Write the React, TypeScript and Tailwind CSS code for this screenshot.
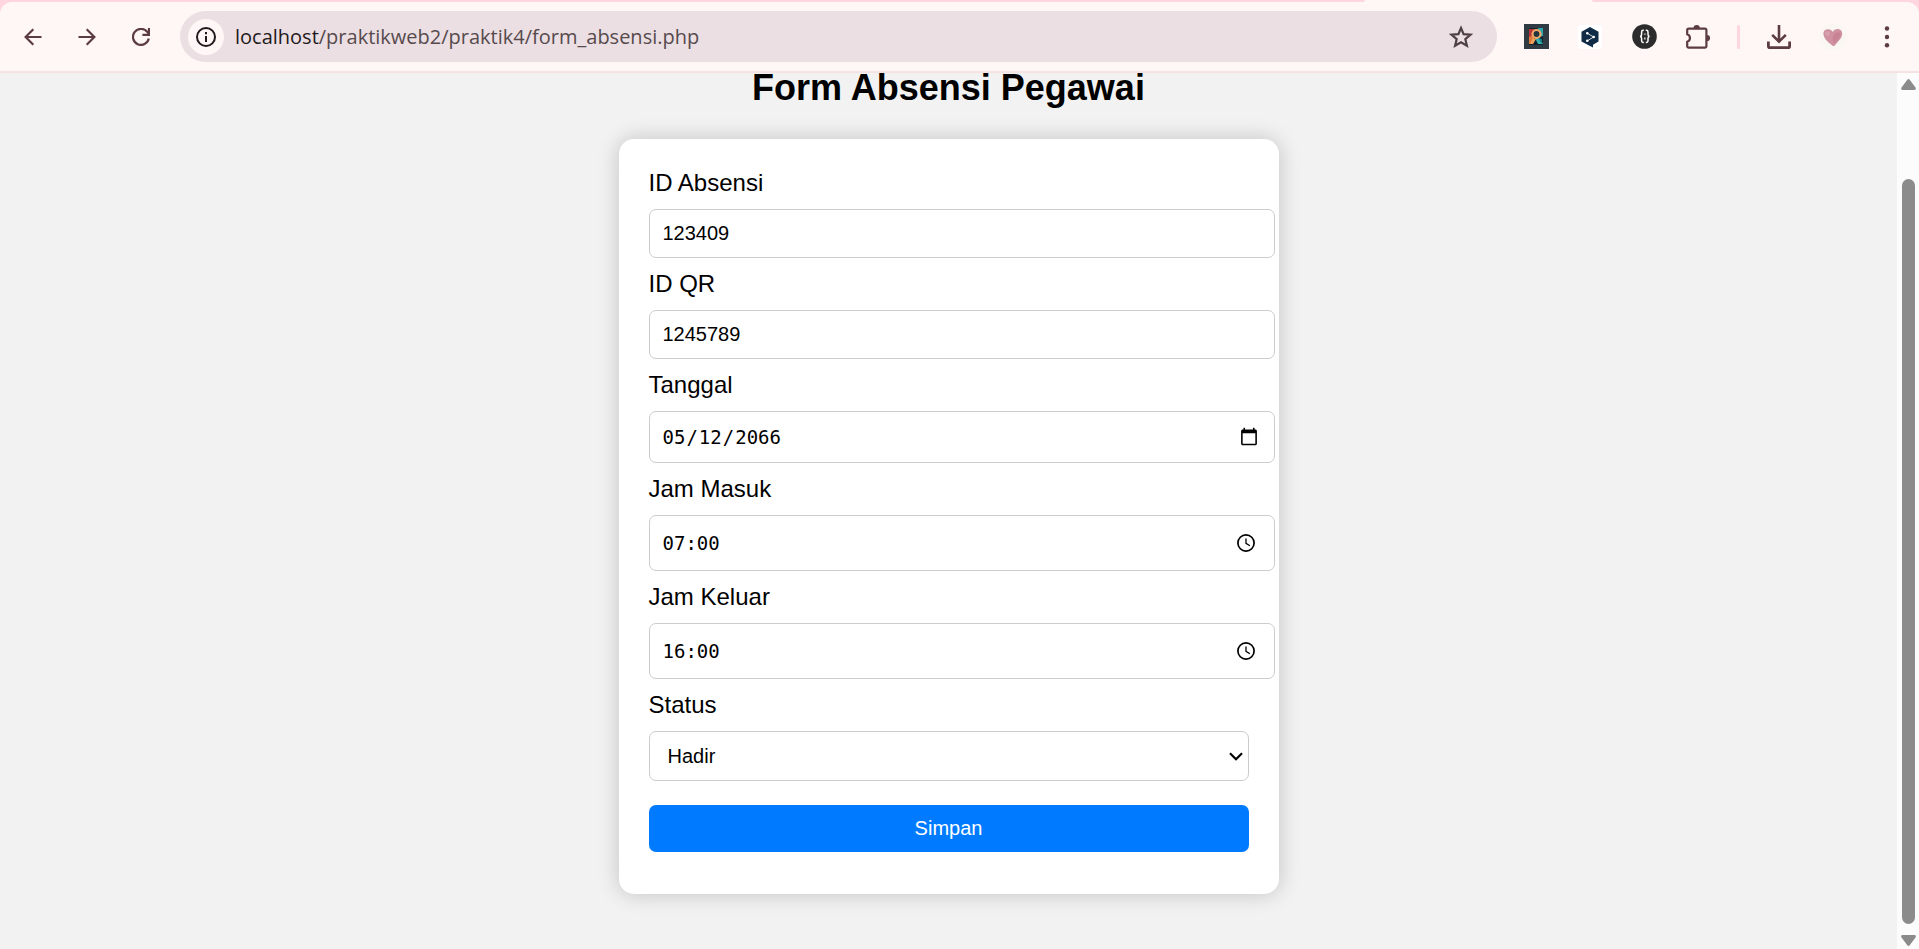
import type { ReactNode } from 'react';

function BackIcon() {
  return (
    <svg width="18" height="18" viewBox="0 0 18 18" fill="none" stroke="#5c3c42" strokeWidth="2.2">
      <path d="M17.5 9H2M9.3 1.2 1.6 9l7.7 7.8" />
    </svg>
  );
}

function ForwardIcon() {
  return (
    <svg width="18" height="18" viewBox="0 0 18 18" fill="none" stroke="#5c3c42" strokeWidth="2.2">
      <path d="M.5 9H16M8.7 1.2 16.4 9l-7.7 7.8" />
    </svg>
  );
}

function ReloadIcon() {
  return (
    <svg width="18" height="18" viewBox="0 0 18 18" fill="none" stroke="#5c3c42" strokeWidth="2.2">
      <path d="M16.8 10.6A8 8 0 1 1 15 3.6L17 6" />
      <path d="M17 0v6.9h-6.6" />
    </svg>
  );
}

function InfoIcon() {
  return (
    <svg width="20" height="20" viewBox="0 0 20 20" fill="none" stroke="#1f1a1b" strokeWidth="2">
      <circle cx="10" cy="10" r="9" />
      <path d="M10 9v6M10 5v2.2" />
    </svg>
  );
}

function StarIcon() {
  return (
    <svg width="24" height="24" viewBox="0 0 24 24" fill="none" stroke="#4f4044" strokeWidth="2.2">
      <path d="M12 3l2.600 6.200 6.900.5-5.200 4.400 1.600 6.700L12 17.200 6.100 20.800l1.600-6.700-5.200-4.400 6.900-.5z" />
    </svg>
  );
}

function PosterIcon() {
  return (
    <svg width="25" height="25" viewBox="0 0 25 25">
      <rect width="25" height="25" fill="#2f3a42" />
      <rect x="5" y="4" width="14" height="17" fill="#14212b" />
      <path d="M5 5h5v6l-3 3H5z" fill="#b8323a" />
      <path d="M14 4h5v8l-4 1z" fill="#2ba7ad" />
      <path d="M11 14l4-1 4 7h-5z" fill="#36b3b0" />
      <path d="M5 13l5-2v5l-4 4H5z" fill="#e07a3a" />
      <circle cx="12.500" cy="10" r="4" fill="#22343e" stroke="#f3a867" strokeWidth="2.200" />
      <path d="M9 14l3 1-3 5H6z" fill="#f0a35e" />
      <path d="M14 14l4 1v5z" fill="#157c88" />
    </svg>
  );
}

function TranslateIcon() {
  return (
    <svg width="24" height="24" viewBox="0 0 24 24">
      <rect width="24" height="24" rx="3" fill="#fff" />
      <path d="M12 2l8.500 4.800v9.800L15 19.800V22.500l-3.500-1.800-8-4.100V6.800z" fill="#0f2b46" />
      <path d="M9.300 8.300l6.400 3.700-6.400 3.800" fill="none" stroke="#fff" strokeWidth=".8" />
      <g fill="#fff">
        <circle cx="9.300" cy="8.300" r="1.300" />
        <circle cx="15.700" cy="12" r="1.300" />
        <circle cx="9.300" cy="15.800" r="1.300" />
      </g>
    </svg>
  );
}

function BracesIcon() {
  return (
    <svg width="25" height="25" viewBox="0 0 25 25">
      <circle cx="12.500" cy="12.500" r="12.300" fill="#2d2c2d" />
      <g fill="none" stroke="#fff" strokeWidth="1.500">
        <path d="M11.800 6.300h-.6c-1 0-1.600.5-1.600 1.600v2.600c0 1.200-.4 1.700-1.500 1.900 1.100.2 1.500.7 1.500 1.900v2.500c0 1.100.6 1.600 1.600 1.600h.6" />
        <path d="M13.800 6.300h.6c1 0 1.600.5 1.600 1.600v2.600c0 1.200.4 1.700 1.500 1.900-1.100.2-1.500.7-1.500 1.900v2.500c0 1.100-.6 1.600-1.600 1.600h-.6" />
        <path d="M12.900 9.400v1.400M12.900 13.500v2" strokeWidth="1.200" />
      </g>
    </svg>
  );
}

function PuzzleIcon() {
  return (
    <svg width="26" height="26" viewBox="0 0 26 26">
      <path
        d="M3.600 4.600H20a1.400 1.400 0 0 1 1.400 1.400v16.300a1.400 1.400 0 0 1-1.400 1.400H3.600a1.400 1.400 0 0 1-1.400-1.400v-4.500a4 4 0 0 0 0-7.600V6a1.400 1.400 0 0 1 1.400-1.400z"
        fill="none"
        stroke="#5c3c42"
        strokeWidth="2.200"
      />
      <path d="M8.600 4a3.100 3.100 0 0 1 6.200 0zM22 11a3.100 3.100 0 0 1 0 6.200z" fill="#5c3c42" />
    </svg>
  );
}

function DownloadIcon() {
  return (
    <svg width="24" height="24" viewBox="0 0 24 24" fill="none" stroke="#5c3c42">
      <path d="M12 0v16M5.200 9.800l6.800 6.800 6.800-6.800" strokeWidth="2.600" />
      <path d="M1.400 16.500v4.700c0 .8.600 1.400 1.400 1.400h18.400c.8 0 1.400-.6 1.400-1.400v-4.700" strokeWidth="2.800" />
    </svg>
  );
}

function ProfileIcon() {
  return (
    <svg width="28" height="28" viewBox="0 0 28 28">
      <circle cx="14" cy="14" r="14" fill="#faf7f2" />
      <path
        d="M13.800 9C12.500 5.200 4.300 4.700 4.400 10.800c.2 5 5.400 9 9.200 12 1.200.5 2 .2 2.600-.7 2.600-3.700 7-6.400 7-11.800-.5-5.300-7.600-5.500-9.400-1.300z"
        fill="#cf919f"
      />
      <path d="M15 12c2-3.500 5-3.500 6.500-1.500.5 4-3.500 7-6 9.500-2-1-2.500-5-.5-8z" fill="#c37d90" opacity=".7" />
      <path d="M6 9c1.500-1.500 4-1 5.500 1.500C11 13 8 13.500 6.500 12.500z" fill="#dba9b3" opacity=".6" />
    </svg>
  );
}

function MenuIcon() {
  return (
    <svg width="6" height="24" viewBox="0 0 6 24" fill="#5c3c42">
      <circle cx="3" cy="3.500" r="2.200" />
      <circle cx="3" cy="12" r="2.200" />
      <circle cx="3" cy="20.200" r="2.200" />
    </svg>
  );
}

function ClockIcon() {
  return (
    <svg width="18" height="18" viewBox="0 0 18 18" fill="none" stroke="#000">
      <circle cx="9" cy="9" r="8.100" strokeWidth="1.700" />
      <path d="M9 4.400v5l3.900 2.400" strokeWidth="1.300" />
    </svg>
  );
}

function IconButton({ label, children }: { label: string; children: ReactNode }) {
  return (
    <button type="button" aria-label={label} className="flex size-7 shrink-0 items-center justify-center">
      {children}
    </button>
  );
}

function BrowserBar() {
  return (
    <header className="bg-[#ffd6df]">
      <div className="flex h-[2px] bg-[#fff7f5]">
        <div className="flex-1 rounded-br-[2px] bg-[#ffd6df]" />
        <div className="w-[227px]" />
        <div className="w-[327px] rounded-bl-[2px] bg-[#ffd6df]" />
      </div>
      <div className="flex h-[71px] items-center rounded-t-xl border-b-2 border-[#f5e2e2] bg-[#fff7f5] pr-[18px] pl-[19px]">
        <nav className="flex gap-[26px] pr-[25px]">
          <IconButton label="Back"><BackIcon /></IconButton>
          <IconButton label="Forward"><ForwardIcon /></IconButton>
          <IconButton label="Reload"><ReloadIcon /></IconButton>
        </nav>
        <div className="flex h-[51px] min-w-0 flex-1 items-center rounded-full bg-[#ebdfe3] pr-[22px] pl-2">
          <button
            type="button"
            aria-label="Site information"
            className="flex size-9 shrink-0 items-center justify-center rounded-full bg-[#fff7f5]"
          >
            <InfoIcon />
          </button>
          <p className="ml-[11px] flex-1 truncate font-['Open_Sans','Noto_Sans',sans-serif] text-[20px] leading-7 text-[#574a4d]">
            <span className="text-[#1f1a1b]">localhost</span>/praktikweb2/praktik4/form_absensi.php
          </p>
          <IconButton label="Bookmark"><StarIcon /></IconButton>
        </div>
        <div className="flex items-center gap-[26px] pl-[25px]">
          <IconButton label="Poster extension"><PosterIcon /></IconButton>
          <IconButton label="Translate extension"><TranslateIcon /></IconButton>
          <IconButton label="JSON extension"><BracesIcon /></IconButton>
          <IconButton label="Extensions"><PuzzleIcon /></IconButton>
        </div>
        <div className="mx-[25px] h-6 w-[3px] rounded-full bg-[#ffd6df]" />
        <div className="flex items-center gap-[26px]">
          <IconButton label="Downloads"><DownloadIcon /></IconButton>
          <IconButton label="Profile"><ProfileIcon /></IconButton>
          <IconButton label="Menu"><MenuIcon /></IconButton>
        </div>
      </div>
    </header>
  );
}

function Scrollbar() {
  return (
    <div aria-hidden="true" className="flex w-[22px] shrink-0 flex-col items-center bg-[#fcfcfc] pt-[6px] pb-[3px]">
      <svg width="15" height="11" viewBox="0 0 15 11" fill="#8b8b8b">
        <path d="M6.300.8a1.600 1.600 0 0 1 2.400 0l5.800 7.800c.7 1 .2 2.400-1 2.400h-12C.3 11-.2 9.600.5 8.600z" />
      </svg>
      <div className="mt-[89px] mb-[11px] w-[13px] flex-1 rounded-full bg-[#8b8b8b]" />
      <svg width="15" height="11" viewBox="0 0 15 11" fill="#8b8b8b">
        <path d="M6.300 10.200a1.600 1.600 0 0 0 2.400 0l5.800-7.800c.7-1 .2-2.400-1-2.400h-12C.3 0-.2 1.400.5 2.400z" />
      </svg>
    </div>
  );
}

function Field({ id, label, children }: { id: string; label: string; children: ReactNode }) {
  return (
    <div className="mb-3">
      <label htmlFor={id} className="mb-3 block text-[24px] leading-7">
        {label}
      </label>
      {children}
    </div>
  );
}

function TextInput({ id, value }: { id: string; value: string }) {
  return (
    <input
      id={id}
      name={id}
      type="text"
      defaultValue={value}
      className="block h-[49px] w-[calc(100%+26px)] rounded-[7px] border border-[#ccc] bg-white px-[13px] text-[20px]"
    />
  );
}

function TimeInput({ id, value }: { id: string; value: string }) {
  return (
    <div className="relative w-[calc(100%+26px)]">
      <input
        id={id}
        name={id}
        type="text"
        defaultValue={value}
        className="block h-14 w-full rounded-[7px] border border-[#ccc] bg-white px-[13px] font-['DejaVu_Sans_Mono',monospace] text-[19px]"
      />
      <button type="button" aria-label="Pilih jam" className="absolute inset-y-0 right-5 flex items-center">
        <ClockIcon />
      </button>
    </div>
  );
}

export default function App() {
  return (
    <div className="flex min-h-screen flex-col font-['Liberation_Sans',Arial,sans-serif] text-black">
      <BrowserBar />
      <div className="flex flex-1 bg-[#f2f2f2]">
        <main className="flex min-w-0 flex-1 flex-col items-center pb-12">
          <h1 className="mb-9 text-[36px] leading-[30px] font-bold">Form Absensi Pegawai</h1>
          <form
            onSubmit={(event) => event.preventDefault()}
            className="w-full max-w-[660px] rounded-[15px] bg-white px-[30px] pt-[30px] pb-[42px] shadow-[0_0_22px_rgba(0,0,0,0.2)]"
          >
            <Field id="id_absensi" label="ID Absensi">
              <TextInput id="id_absensi" value="123409" />
            </Field>
            <Field id="id_qr" label="ID QR">
              <TextInput id="id_qr" value="1245789" />
            </Field>
            <Field id="tanggal" label="Tanggal">
              <input
                id="tanggal"
                name="tanggal"
                type="date"
                defaultValue="2066-05-12"
                className="block h-[52px] w-[calc(100%+26px)] rounded-[7px] border border-[#ccc] bg-white pr-[13px] pl-3 font-['DejaVu_Sans_Mono',monospace] text-[19px] [&::-webkit-calendar-picker-indicator]:size-5"
              />
            </Field>
            <Field id="jam_masuk" label="Jam Masuk">
              <TimeInput id="jam_masuk" value="07:00" />
            </Field>
            <Field id="jam_keluar" label="Jam Keluar">
              <TimeInput id="jam_keluar" value="16:00" />
            </Field>
            <Field id="status" label="Status">
              <div className="relative">
                <select
                  id="status"
                  name="status"
                  defaultValue="Hadir"
                  className="block h-[50px] w-full appearance-none rounded-[7px] border border-[#ccc] bg-white px-[18px] text-[20px]"
                >
                  <option>Hadir</option>
                  <option>Izin</option>
                  <option>Sakit</option>
                </select>
                <div className="pointer-events-none absolute inset-y-0 right-[6px] flex items-center">
                  <svg width="14" height="9" viewBox="0 0 14 9" fill="none" stroke="#000" strokeWidth="2.200">
                    <path d="M1 1.200l6 6 6-6" />
                  </svg>
                </div>
              </div>
            </Field>
            <button
              type="submit"
              className="mt-6 block h-[47px] w-full rounded-[7px] bg-[#007bff] pb-0.5 text-[20px] text-white"
            >
              Simpan
            </button>
          </form>
        </main>
        <Scrollbar />
      </div>
    </div>
  );
}
